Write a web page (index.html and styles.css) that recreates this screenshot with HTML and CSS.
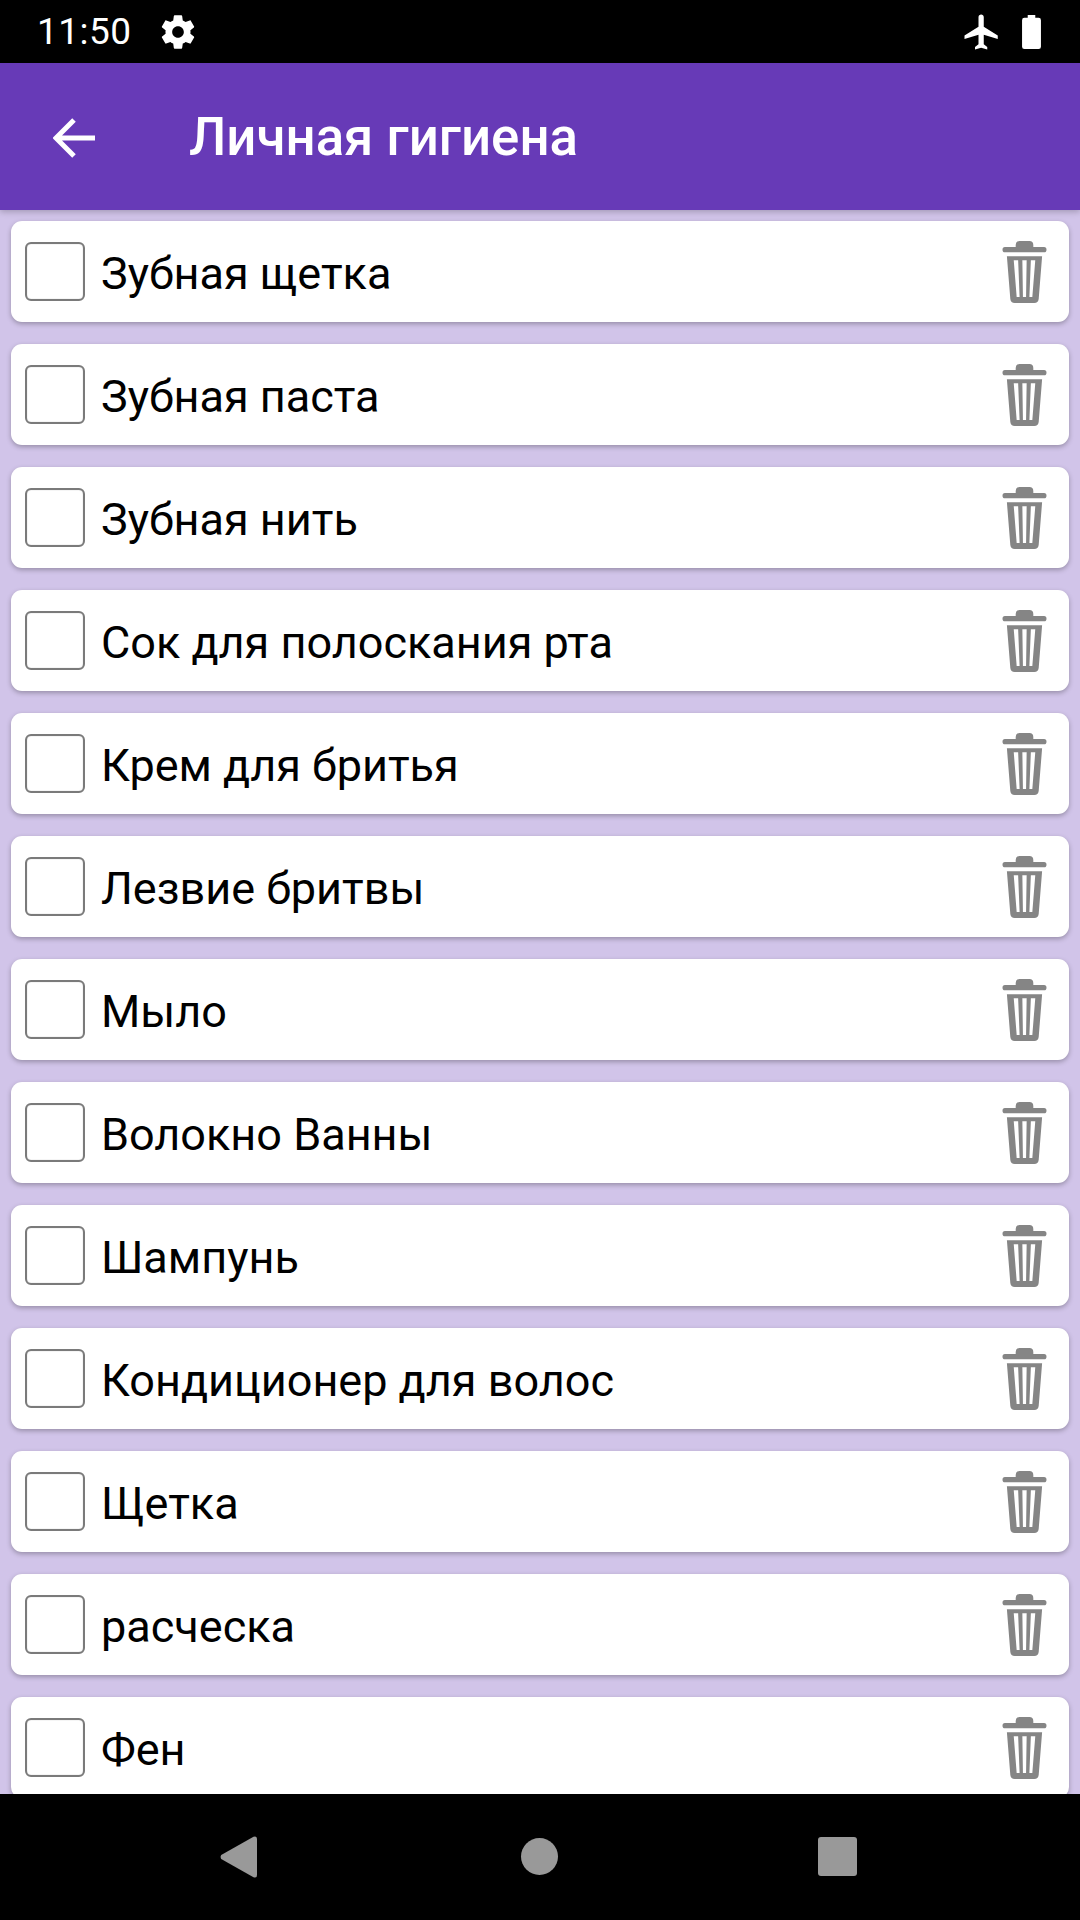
FILE: index.html
```html
<!DOCTYPE html>
<html lang="ru">
<head>
<meta charset="utf-8">
<title>Личная гигиена</title>
<link rel="stylesheet" href="styles.css">
<script src="app.js" defer></script>
</head>
<body>
<svg class="defs" width="0" height="0" aria-hidden="true">
  <symbol id="trash" viewBox="0 0 46 62" preserveAspectRatio="none">
    <path d="M14 5 Q14 1 18 1 H28 Q32 1 32 5 V7 H43 Q45.500 7 45.500 9.500 Q45.500 12 43 12 H3 Q.5 12 .5 9.500 Q.5 7 3 7 H14 Z"/>
    <path fill-rule="evenodd" d="M5 16 H41 L37.500 58 Q37 62 33 62 H13 Q9 62 8.500 58 Z M12 20 L15 56 H18 L16.500 20 Z M20.800 20 L21.400 56 H24.600 L25.200 20 Z M29.500 20 L28 56 H31 L34 20 Z"/>
  </symbol>
</svg>
<div class="phone">
  <header class="status">
    <div class="status-left">
      <span class="time">11:50</span>
      <svg class="gear" viewBox="0 0 24 24"><path d="M19.430 12.980c.04-.32.070-.64.070-.98s-.03-.66-.07-.98l2.110-1.650c.19-.15.240-.42.120-.64l-2-3.460c-.12-.22-.39-.30-.61-.22l-2.490 1c-.52-.4-1.080-.73-1.690-.98l-.38-2.650C14.460 2.180 14.250 2 14 2h-4c-.25 0-.46.180-.49.420l-.38 2.650c-.61.250-1.170.590-1.690.98l-2.490-1c-.23-.090-.49 0-.61.220l-2 3.460c-.13.220-.07.490.12.640l2.110 1.650c-.04.320-.07.650-.07.980s.03.660.07.980l-2.110 1.650c-.19.150-.24.420-.12.640l2 3.460c.12.220.39.300.61.220l2.490-1c.52.400 1.080.730 1.690.980l.38 2.650c.03.240.240.420.49.420h4c.25 0 .46-.18.49-.42l.38-2.650c.61-.25 1.170-.59 1.690-.98l2.490 1c.23.090.49 0 .61-.22l2-3.460c.12-.22.070-.49-.12-.64l-2.110-1.650zM12 15.500c-1.930 0-3.500-1.570-3.500-3.500s1.570-3.500 3.500-3.500 3.500 1.570 3.500 3.500-1.570 3.500-3.500 3.500z"/></svg>
    </div>
    <div class="status-right">
      <svg class="plane" viewBox="0 0 24 24"><path d="M21 16v-2l-8-5V3.500C13 2.670 12.330 2 11.500 2S10 2.670 10 3.500V9l-8 5v2l8-2.500V19l-2 1.500V22l3.500-1 3.500 1v-1.500L13 19v-5.500l8 2.500z"/></svg>
      <svg class="battery" viewBox="0 0 20 36"><path d="M6 0h8v3h3.500Q20 3 20 5.500v28Q20 36 17.500 36h-15Q0 36 0 33.500v-28Q0 3 2.500 3H6z"/></svg>
    </div>
  </header>
  <div class="appbar">
    <svg class="back" viewBox="0 0 44 42"><path d="M42 21H4M21 3 3 21l18 18"/></svg>
    <h1 class="title">Личная гигиена</h1>
  </div>
  <main class="list" id="list"></main>
  <footer class="nav">
    <svg class="nav-back" viewBox="0 0 37 42"><path d="M33.500 .8 1.200 19Q0 21 1.200 23L33.500 41.200Q37 42.500 37 39V3Q37-.5 33.500 .8Z"/></svg>
    <span class="nav-home"></span>
    <span class="nav-recent"></span>
  </footer>
</div>
</body>
</html>
```
FILE: app.js
```js
const items = ["Зубная щетка","Зубная паста","Зубная нить","Сок для полоскания рта","Крем для бритья","Лезвие бритвы","Мыло","Волокно Ванны","Шампунь","Кондиционер для волос","Щетка","расческа","Фен"];
const list = document.getElementById("list");
for (const name of items) {
  const card = document.createElement("div");
  card.className = "card";
  card.innerHTML = '<span class="check"></span><span class="label"></span><svg class="trash"><use href="#trash"/></svg>';
  card.querySelector(".label").textContent = name;
  list.appendChild(card);
}
```
FILE: styles.css
```css
html, body {
  margin: 0;
  padding: 0;
  background: #000;
}
.defs { position: absolute; }
.phone {
  width: 1080px;
  height: 1920px;
  display: flex;
  flex-direction: column;
  overflow: hidden;
  font-family: Roboto, sans-serif;
}
.status {
  height: 63px;
  flex: none;
  background: #000;
  color: #fff;
  display: flex;
  align-items: center;
  justify-content: space-between;
  padding: 0 39px 0 37px;
}
.status-left, .status-right { display: flex; align-items: center; }
.time { font-size: 37px; letter-spacing: 0.5px; }
.gear { width: 40px; height: 40px; fill: #fff; margin-left: 26px; }
.plane { width: 42px; height: 42px; fill: #fff; }
.battery { width: 19px; height: 34px; fill: #fff; margin-left: 19px; }
.appbar {
  height: 147px;
  flex: none;
  background: #673ab7;
  display: flex;
  align-items: center;
  padding-left: 53px;
  position: relative;
  z-index: 1;
  box-shadow: 0 2px 6px rgba(0,0,0,.22);
}
.back {
  width: 44px;
  height: 42px;
  fill: none;
  stroke: #fff;
  stroke-width: 5px;
  margin-top: 2px;
}
.title {
  margin: 1px 0 0 92px;
  font-size: 52.800px;
  font-weight: 500;
  color: #fff;
}
.list {
  flex: 1;
  min-height: 0;
  overflow: hidden;
  background: #d1c4e9;
  padding: 11px 11px 0;
  display: flex;
  flex-direction: column;
  gap: 22px;
}
.card {
  flex: none;
  height: 101px;
  box-sizing: border-box;
  background: #fff;
  border-radius: 11px;
  box-shadow: 0 2px 5px rgba(0,0,0,.28);
  display: flex;
  align-items: center;
  padding: 0 22px 0 14px;
}
.check {
  width: 60px;
  height: 59px;
  box-sizing: border-box;
  border: 2px solid #7a7a7a;
  border-radius: 6px;
  box-shadow: inset 0 0 1px rgba(0,0,0,.4);
  flex: none;
}
.label {
  flex: 1;
  margin: 3px 0 0 16px;
  font-size: 45px;
  color: #000;
}
.trash {
  width: 45px;
  height: 63px;
  fill: #858585;
  flex: none;
}
.nav {
  height: 126px;
  flex: none;
  background: #000;
  position: relative;
}
.nav-back { position: absolute; left: 220px; top: 42px; width: 37px; height: 42px; fill: #999; }
.nav-home { position: absolute; left: 520.500px; top: 44px; width: 37px; height: 37px; border-radius: 50%; background: #999; }
.nav-recent { position: absolute; left: 818px; top: 43px; width: 39px; height: 39px; border-radius: 3px; background: #999; }
```
